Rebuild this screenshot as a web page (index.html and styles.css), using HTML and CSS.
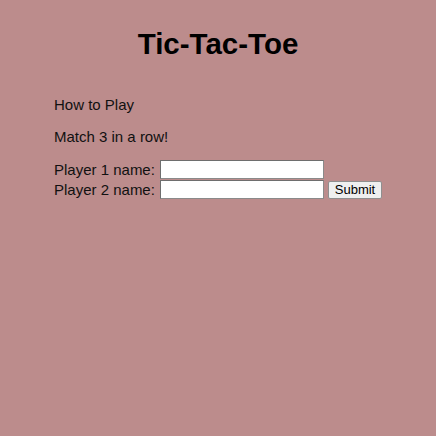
FILE: index.html
```html
<!DOCTYPE html>
<html>
<head>
<meta charset="utf-8">
<title>Tic-Tac-Toe</title>
<link rel="stylesheet" href="styles.css">
</head>
<body>
<h1 class="title">Tic-Tac-Toe</h1>
<div class="content">
  <p class="line">How to Play</p>
  <p class="line">Match 3 in a row!</p>
  <form class="players">
    <div class="row">
      <label class="label" for="p1">Player 1 name:</label>
      <input class="field" id="p1" type="text">
    </div>
    <div class="row">
      <label class="label" for="p2">Player 2 name:</label>
      <input class="field" id="p2" type="text">
      <button class="submit" type="button">Submit</button>
    </div>
  </form>
</div>
</body>
</html>
```
FILE: styles.css
```css
html, body {
  margin: 0;
  padding: 0;
  background: #bc8c8c;
  height: 100%;
}
body {
  font-family: "Liberation Sans", Arial, sans-serif;
  font-size: 15px;
  color: #111;
  padding-top: 28px;
  box-sizing: border-box;
}
.title {
  margin: 0;
  font-size: 29.5px;
  line-height: 32px;
  font-weight: bold;
  text-align: center;
  color: #000;
}
.content {
  margin-top: 36px;
  padding-left: 54px;
}
.line {
  margin: 0 0 15px 0;
  line-height: 17px;
}
.players {
  display: flex;
  flex-direction: column;
  gap: 1px;
}
.row {
  display: flex;
  align-items: center;
  height: 19px;
}
.label {
  width: 106px;
  line-height: 17px;
}
.field {
  box-sizing: border-box;
  width: 164px;
  height: 19px;
  margin: 0;
  padding: 1px 2px;
  background: #fff;
  border: 1px solid #8a8a8a;
  border-top-color: #6e6e6e;
  border-left-color: #6e6e6e;
  font-family: "Liberation Sans", Arial, sans-serif;
  font-size: 13px;
}
.submit {
  box-sizing: border-box;
  margin-left: 4px;
  width: 54px;
  height: 18px;
  padding: 0;
  background: #efefef;
  border: 1px solid #8f8f8f;
  border-radius: 2px;
  font-family: "Liberation Sans", Arial, sans-serif;
  font-size: 13px;
  color: #000;
  line-height: 16px;
}
```
